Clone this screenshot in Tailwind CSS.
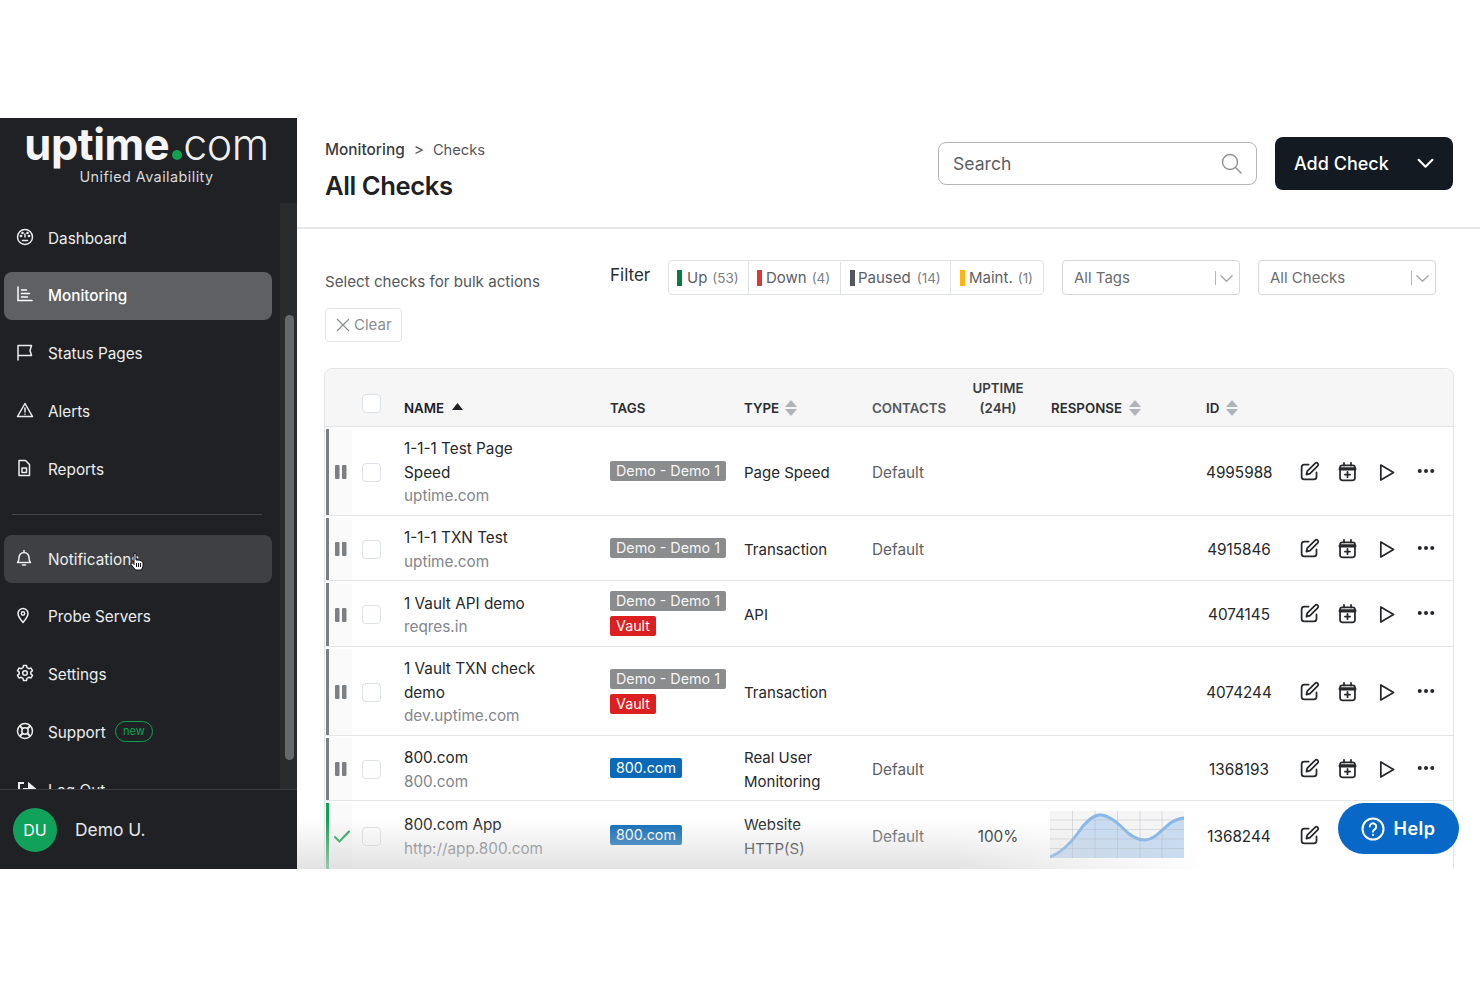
<!DOCTYPE html>
<html lang="en">
<head>
<meta charset="utf-8">
<title>All Checks</title>
<script src="https://cdn.jsdelivr.net/npm/@tailwindcss/browser@4"></script>
</head>
<body class="bg-white font-['Inter',sans-serif] text-[#26282b]">
<svg class="hidden" aria-hidden="true">
  <symbol id="edit" viewBox="0 0 24 24" fill="none" stroke="currentColor" stroke-width="2" stroke-linecap="round" stroke-linejoin="round"><path d="M11 4H6a3 3 0 0 0-3 3v11a3 3 0 0 0 3 3h11a3 3 0 0 0 3-3v-5"/><path d="M18.4 2.6a2 2 0 0 1 3 3L12.5 14.500 8.500 15.500l1-4z"/></symbol>
  <symbol id="cal" viewBox="0 0 24 24" fill="none" stroke="currentColor" stroke-width="2" stroke-linecap="round"><rect x="3.500" y="5" width="17" height="17" rx="2.500"/><path d="M3.500 9h17" stroke-width="3.500"/><path d="M8 2v3M16 2v3M12 12.500v6M9 15.500h6"/></symbol>
  <symbol id="play" viewBox="0 0 24 24" fill="none" stroke="currentColor" stroke-width="2" stroke-linejoin="round"><path d="M5.500 3.500v17l14.500-8.500z"/></symbol>
  <symbol id="dots" viewBox="0 0 24 24" fill="currentColor"><circle cx="4.500" cy="12" r="2.400"/><circle cx="12" cy="12" r="2.400"/><circle cx="19.500" cy="12" r="2.400"/></symbol>
  <symbol id="pause" viewBox="0 0 12 14" fill="currentColor"><rect x="0" y="0" width="4.500" height="14" rx="1"/><rect x="7" y="0" width="4.500" height="14" rx="1"/></symbol>
  <symbol id="sort" viewBox="0 0 12 16" fill="#b0b4b8"><path d="M6 0l6 7H0zM6 16L0 9h12z"/></symbol>
  <symbol id="chev" viewBox="0 0 16 16" fill="none" stroke="currentColor" stroke-width="1.500" stroke-linecap="round" stroke-linejoin="round"><path d="M2 5l6 6 6-6"/></symbol>
</svg>

<div class="w-[1480px] h-[987px] pt-[118px] overflow-hidden">
  <div class="relative flex h-[751px] overflow-hidden">

    <!-- Sidebar -->
    <aside class="relative w-[297px] shrink-0 h-full bg-[#1f2125] text-[#eceded] flex flex-col">
      <div class="h-[85px] shrink-0 flex flex-col items-center pr-[4px]">
        <div class="flex items-baseline h-[50px] mt-[1px] text-white leading-[50px]">
          <span class="font-bold text-[43.500px] tracking-[-0.5px] text-[#f5f5f5]">uptime</span>
          <span class="w-[10px] h-[10px] rounded-full bg-[#12a150] ml-[3px] mr-[1px] mb-[1px]"></span>
          <span class="font-light text-[43px] tracking-[-0.5px] text-[#f0f0f0]">com</span>
        </div>
        <div class="text-[14.400px] leading-[18px] mt-[-1px] tracking-[0.45px] text-[#d8d9da]">Unified Availability</div>
      </div>

      <div class="relative flex-1 min-h-0 overflow-hidden">
        <nav class="pt-[11px] pl-[4px] w-[272px] flex flex-col gap-[9.750px] text-[15.300px]">
          <a class="flex items-center h-[48px] rounded-lg gap-[14px] pl-[12px]">
            <svg class="w-[18px] h-[18px] -mt-[3px]" viewBox="0 0 18 18" fill="none" stroke="currentColor" stroke-width="1.500" stroke-linecap="round"><circle cx="9" cy="9" r="7.500"/><path d="M9 9V6M6.500 12.500h5" /><circle cx="5" cy="8" r=".6"/><circle cx="6.500" cy="5" r=".6"/><circle cx="11.500" cy="5" r=".6"/><circle cx="13" cy="8" r=".6"/></svg>
            <span class="pt-[2px]">Dashboard</span>
          </a>
          <a class="flex items-center h-[48px] rounded-lg gap-[14px] pl-[12px] bg-[#5f6064] text-white font-medium">
            <svg class="w-[18px] h-[18px] -mt-[3px]" viewBox="0 0 18 18" fill="none" stroke="currentColor" stroke-width="1.500" stroke-linecap="round"><path d="M2 2v13.500h14M5.500 5h5M5.500 8.500h8M5.500 12h6"/></svg>
            <span class="pt-[2px]">Monitoring</span>
          </a>
          <a class="flex items-center h-[48px] rounded-lg gap-[14px] pl-[12px]">
            <svg class="w-[18px] h-[18px] -mt-[3px]" viewBox="0 0 18 18" fill="none" stroke="currentColor" stroke-width="1.500" stroke-linejoin="round" stroke-linecap="round"><path d="M2 17V2.500h13.500l-1.500 5 1.500 5H2"/></svg>
            <span class="pt-[2px]">Status Pages</span>
          </a>
          <a class="flex items-center h-[48px] rounded-lg gap-[14px] pl-[12px]">
            <svg class="w-[18px] h-[18px] -mt-[3px]" viewBox="0 0 18 18" fill="none" stroke="currentColor" stroke-width="1.500" stroke-linejoin="round" stroke-linecap="round"><path d="M9 2.500L16.500 15.500h-15zM9 7v4M9 13.200v.1"/></svg>
            <span class="pt-[2px]">Alerts</span>
          </a>
          <a class="flex items-center h-[48px] rounded-lg gap-[14px] pl-[12px]">
            <svg class="w-[18px] h-[18px] -mt-[3px] -ml-[1px] mr-[1px]" viewBox="0 0 18 18" fill="none" stroke="currentColor" stroke-width="1.500" stroke-linejoin="round" stroke-linecap="round"><path d="M4 1.500h6.500L14.500 5.500v11H4zM7 9h4.500v4.500H7z"/></svg>
            <span class="pt-[2px]">Reports</span>
          </a>
          <div class="h-px bg-[#44464a] ml-[8px] w-[250px] my-[10.750px]"></div>
          <a class="relative flex items-center h-[48px] rounded-lg gap-[14px] pl-[12px] bg-[#3f4044]">
            <svg class="w-[18px] h-[18px] -mt-[3px] -ml-[1px] mr-[1px]" viewBox="0 0 18 18" fill="none" stroke="currentColor" stroke-width="1.500" stroke-linejoin="round" stroke-linecap="round"><path d="M2.500 13.500c1.500-1.500 1.500-3 1.500-5a5 5 0 0 1 10 0c0 2 0 3.500 1.500 5zM9 1.500v1.500M7.500 16h3"/></svg>
            <span class="pt-[2px]">Notifications</span>
            <svg class="absolute left-[126px] top-[17px] w-[14px] h-[19px]" viewBox="0 0 14 19"><path d="M4 1.500Q5.500.5 6 2V8H8L9.500 8.300 11 8.800 12.500 9.500 13 11V14L11.500 18H5.500L1 12.500Q.5 10.500 2.500 11L4 12.500Z" fill="#fff" stroke="#111" stroke-width="1"/><path d="M6.500 11v4M8.500 11v4M10.500 11v4" stroke="#111" stroke-width="1"/></svg>
          </a>
          <a class="flex items-center h-[48px] rounded-lg gap-[14px] pl-[12px]">
            <svg class="w-[18px] h-[18px] -mt-[3px] -ml-[2px] mr-[2px]" viewBox="0 0 18 18" fill="none" stroke="currentColor" stroke-width="1.500" stroke-linejoin="round"><path d="M9 16.500c-3-3.500-5-6-5-9a5 5 0 0 1 10 0c0 3-2 5.500-5 9z"/><circle cx="9" cy="7.500" r="1.700"/></svg>
            <span class="pt-[2px]">Probe Servers</span>
          </a>
          <a class="flex items-center h-[48px] rounded-lg gap-[14px] pl-[12px]">
            <svg class="w-[18px] h-[18px] -mt-[3px]" viewBox="0 0 18 18" fill="none" stroke="currentColor" stroke-width="1.500" stroke-linejoin="round"><path d="M7.500 1.500h3l.5 2.200 1.800 1 2.200-.7 1.500 2.600-1.700 1.500v1.800l1.700 1.500-1.500 2.600-2.200-.7-1.800 1-.5 2.200h-3l-.5-2.200-1.800-1-2.200.7-1.500-2.600 1.700-1.500V8.100L1.500 6.600 3 4l2.200.7 1.800-1z"/><circle cx="9" cy="9" r="2.300"/></svg>
            <span class="pt-[2px]">Settings</span>
          </a>
          <a class="flex items-center h-[48px] rounded-lg gap-[14px] pl-[12px]">
            <svg class="w-[18px] h-[18px] -mt-[3px]" viewBox="0 0 18 18" fill="none" stroke="currentColor" stroke-width="1.500"><circle cx="9" cy="9" r="7.500"/><circle cx="9" cy="9" r="3.200"/><path d="M3.700 3.700l3 3M14.300 3.700l-3 3M3.700 14.300l3-3M14.300 14.300l-3-3" stroke-width="2"/></svg>
            <span class="pt-[2px]">Support</span>
            <span class="-ml-[5px] -mt-[2px] h-[21px] w-[38px] rounded-full border border-[#12a150] text-[#12a150] text-[11px] leading-[18px] text-center">new</span>
          </a>
          <a class="flex items-center h-[48px] rounded-lg gap-[14px] pl-[12px]">
            <svg class="w-[20px] h-[18px] -mt-[3px]" viewBox="0 0 20 18" fill="none" stroke="currentColor" stroke-width="2"><path d="M8 3H3v12h5"/><path d="M7 9h6V4l6 5-6 5V9" fill="currentColor"/></svg>
            <span class="-ml-[2px] pt-[2px]">Log Out</span>
          </a>
        </nav>
        <div class="absolute right-0 top-0 bottom-0 w-[17px] bg-[#2a2b2c] mt-0">
          <div class="absolute top-[112px] left-[5px] w-[9px] h-[445px] rounded-full bg-[#67686a]"></div>
        </div>
      </div>

      <div class="h-[80px] shrink-0 border-t border-[#3a3c40] bg-[#1f2125] flex items-center pl-[13px] gap-[18px] relative">
        <div class="w-[44px] h-[44px] rounded-full bg-[#10a25a] text-white text-[16px] flex items-center justify-center">DU</div>
        <span class="text-[17.400px] text-[#e8e8e8] pt-[1px]">Demo U.</span>
      </div>
    </aside>

    <!-- Main -->
    <main class="flex-1 min-w-0 h-full overflow-hidden bg-white">
      <header class="h-[111px] border-b-2 border-[#e6e8ea] flex items-start pl-[28px] pr-[27px]">
        <div class="flex-1">
          <div class="mt-[21px] pt-[1px] text-[15.400px] leading-[20px] flex gap-[9px]">
            <span class="font-medium text-[#3a3d40]">Monitoring</span><span class="text-[#555]">&gt;</span><span class="text-[#55585b] text-[14.700px]">Checks</span>
          </div>
          <h1 class="mt-[8px] text-[25.600px] leading-[36px] font-semibold text-[#1f2125] tracking-[-0.4px]">All Checks</h1>
        </div>
        <div class="mt-[24px] w-[319px] h-[43px] rounded-lg border border-[#b5b5b5] flex items-center justify-between pl-[14px] pr-[14px] text-[17.600px] text-[#5d6064]">
          <span class="pt-[1px]">Search</span>
          <svg class="w-[21px] h-[21px] text-[#8f9294]" viewBox="0 0 21 21" fill="none" stroke="currentColor" stroke-width="1.400" stroke-linecap="round"><circle cx="9" cy="9" r="7.500"/><path d="M14.500 14.500l5.500 5.500"/></svg>
        </div>
        <button class="ml-[18px] mt-[19px] w-[178px] h-[53px] rounded-lg bg-[#131a22] text-white text-[18px] font-medium flex items-center justify-between pl-[19px] pr-[19px]">
          <span>Add Check</span>
          <svg class="w-[17px] h-[17px]" viewBox="0 0 16 16" fill="none" stroke="currentColor" stroke-width="2" stroke-linecap="round" stroke-linejoin="round"><path d="M1.500 4.500L8 11l6.500-6.500"/></svg>
        </button>
      </header>

      <section class="h-[139px] pl-[28px] relative">
        <div class="flex items-start pt-[31px]">
          <div class="w-[285px] pt-[12px] text-[15.150px] leading-[20px] text-[#55585b]">Select checks for bulk actions</div>
          <div class="w-[58px] pt-[4px] text-[17px] leading-[22px] text-[#2a2c2f]">Filter</div>
          <div class="w-[376px] h-[35px] pt-[1px] rounded border border-[#dfe2e5] flex items-center text-[15px] text-[#5d6064]">
            <div class="h-full w-[80px] flex items-center pl-[8px] border-r border-[#dfe2e5]"><span class="w-[5px] h-[16px] bg-[#0b7a43] mr-[5px]"></span>Up<span class="ml-[5px] text-[13.500px] text-[#7d8083]">(53)</span></div>
            <div class="h-full w-[92px] flex items-center pl-[8px] border-r border-[#dfe2e5]"><span class="w-[5px] h-[16px] bg-[#d93a35] mr-[4px]"></span>Down<span class="ml-[5px] text-[13.500px] text-[#7d8083]">(4)</span></div>
            <div class="h-full w-[110px] flex items-center pl-[9px] border-r border-[#dfe2e5]"><span class="w-[5px] h-[16px] bg-[#55585b] mr-[3px]"></span>Paused<span class="ml-[6px] text-[13.500px] text-[#7d8083]">(14)</span></div>
            <div class="h-full flex-1 flex items-center pl-[9px]"><span class="w-[5px] h-[16px] bg-[#fdb515] mr-[4px]"></span>Maint.<span class="ml-[5px] text-[13.500px] text-[#7d8083]">(1)</span></div>
          </div>
          <div class="ml-[18px] w-[178px] h-[35px] pt-[1px] rounded border border-[#d4d6d8] flex items-center pl-[11px] pr-[5px] text-[15px] text-[#6b6e71]">
            <span class="flex-1">All Tags</span><span class="w-px h-[14px] bg-[#b5b7b9] mr-[3px]"></span><svg class="w-[15px] h-[15px] text-[#a5a7a9]"><use href="#chev"/></svg>
          </div>
          <div class="ml-[18px] w-[178px] h-[35px] pt-[1px] rounded border border-[#d4d6d8] flex items-center pl-[11px] pr-[5px] text-[15px] text-[#6b6e71]">
            <span class="flex-1">All Checks</span><span class="w-px h-[14px] bg-[#b5b7b9] mr-[3px]"></span><svg class="w-[15px] h-[15px] text-[#a5a7a9]"><use href="#chev"/></svg>
          </div>
        </div>
        <div class="absolute left-[28px] top-[79px] w-[77px] h-[34px] rounded border border-[#e2e4e6] flex items-center pl-[10px] gap-[4px] text-[15px] text-[#8a8d90]">
          <svg class="w-[14px] h-[14px]" viewBox="0 0 14 14" fill="none" stroke="currentColor" stroke-width="1.200"><path d="M1 1l12 12M13 1L1 13"/></svg>Clear
        </div>
      </section>

      <!-- Table -->
      <div class="ml-[27px] w-[1130px] border border-[#e3e5e7] rounded-t-lg text-[15.300px] leading-[23.500px]">
        <div class="h-[58px] bg-[#f6f6f6] border-b border-[#e3e5e7] rounded-t-lg flex items-end pb-[8px] text-[13.300px] leading-[20px] font-semibold text-[#2a2c2f]">
          <div class="w-[37px] shrink-0"></div>
          <div class="w-[19px] h-[19px] mb-[5px] rounded border border-[#dce1e5] bg-white shrink-0"></div>
          <div class="w-[23px] shrink-0"></div>
          <div class="w-[206px] shrink-0 flex items-center gap-[8px] text-[#1f2125]">NAME<svg class="w-[11px] h-[7px] mb-[3px]" viewBox="0 0 11 7" fill="#1f2125"><path d="M5.500 0L11 7H0z"/></svg></div>
          <div class="w-[134px] shrink-0">TAGS</div>
          <div class="w-[128px] shrink-0 flex items-center gap-[6px]">TYPE<svg class="w-[12px] h-[16px]"><use href="#sort"/></svg></div>
          <div class="w-[100px] shrink-0 text-[#55585b]">CONTACTS</div>
          <div class="w-[52px] shrink-0 text-center leading-[20px] text-[#3a3c3f] whitespace-nowrap flex flex-col items-center">UPTIME<span>(24H)</span></div>
          <div class="w-[27px] shrink-0"></div>
          <div class="w-[155px] shrink-0 flex items-center gap-[7px]">RESPONSE<svg class="w-[12px] h-[16px]"><use href="#sort"/></svg></div>
          <div class="flex items-center gap-[7px]">ID<svg class="w-[12px] h-[16px]"><use href="#sort"/></svg></div>
        </div>

        <div class="h-[89px] pt-[2px] flex items-center border-b border-[#e3e5e7]">
          <div class="ml-px h-full w-[26px] border-l-[3px] border-[#7c8083] bg-[#fafafa] flex items-center pl-[6px] shrink-0"><svg class="w-[12px] h-[14px] text-[#7c8083]"><use href="#pause"/></svg></div>
          <div class="ml-[10px] w-[19px] h-[19px] rounded border border-[#dce1e5] shrink-0"></div>
          <div class="w-[23px] shrink-0"></div>
          <div class="w-[206px] shrink-0 pt-[1px]"><div class="w-[140px]">1-1-1 Test Page Speed</div><div class="text-[#83868a]">uptime.com</div></div>
          <div class="w-[134px] shrink-0 -mt-[2px]"><span class="block w-fit h-[20px] px-[6px] rounded-[2px] bg-[#8a8c8e] text-white/95 text-[14.300px] leading-[20px] whitespace-nowrap">Demo - Demo 1</span></div>
          <div class="w-[128px] shrink-0 pt-[1px] text-[15px]">Page Speed</div>
          <div class="w-[179px] shrink-0 pt-[1px] text-[#5d6064]">Default</div>
          <div class="w-[155px] shrink-0"></div>
          <div class="w-[76px] shrink-0 pt-[1px] text-center pr-[10px]">4995988</div>
          <div class="flex items-center gap-[17px] ml-[17px]"><svg class="w-[21px] h-[21px] -mt-[2px]"><use href="#edit"/></svg><svg class="w-[21px] h-[21px] -mt-[2px]"><use href="#cal"/></svg><svg class="w-[21px] h-[21px] ml-[1px]"><use href="#play"/></svg><svg class="w-[20px] h-[20px] ml-[2px] -mt-[3px]"><use href="#dots"/></svg></div>
        </div>

        <div class="h-[65px] pt-[2px] flex items-center border-b border-[#e3e5e7]">
          <div class="ml-px h-full w-[26px] border-l-[3px] border-[#7c8083] bg-[#fafafa] flex items-center pl-[6px] shrink-0"><svg class="w-[12px] h-[14px] text-[#7c8083]"><use href="#pause"/></svg></div>
          <div class="ml-[10px] w-[19px] h-[19px] rounded border border-[#dce1e5] shrink-0"></div>
          <div class="w-[23px] shrink-0"></div>
          <div class="w-[206px] shrink-0 pt-[1px]"><div>1-1-1 TXN Test</div><div class="text-[#83868a]">uptime.com</div></div>
          <div class="w-[134px] shrink-0 -mt-[2px]"><span class="block w-fit h-[20px] px-[6px] rounded-[2px] bg-[#8a8c8e] text-white/95 text-[14.300px] leading-[20px] whitespace-nowrap">Demo - Demo 1</span></div>
          <div class="w-[128px] shrink-0 pt-[1px] text-[15px]">Transaction</div>
          <div class="w-[179px] shrink-0 pt-[1px] text-[#5d6064]">Default</div>
          <div class="w-[155px] shrink-0"></div>
          <div class="w-[76px] shrink-0 pt-[1px] text-center pr-[10px]">4915846</div>
          <div class="flex items-center gap-[17px] ml-[17px]"><svg class="w-[21px] h-[21px] -mt-[2px]"><use href="#edit"/></svg><svg class="w-[21px] h-[21px] -mt-[2px]"><use href="#cal"/></svg><svg class="w-[21px] h-[21px] ml-[1px]"><use href="#play"/></svg><svg class="w-[20px] h-[20px] ml-[2px] -mt-[3px]"><use href="#dots"/></svg></div>
        </div>

        <div class="h-[66px] pt-[2px] flex items-center border-b border-[#e3e5e7]">
          <div class="ml-px h-full w-[26px] border-l-[3px] border-[#7c8083] bg-[#fafafa] flex items-center pl-[6px] shrink-0"><svg class="w-[12px] h-[14px] text-[#7c8083]"><use href="#pause"/></svg></div>
          <div class="ml-[10px] w-[19px] h-[19px] rounded border border-[#dce1e5] shrink-0"></div>
          <div class="w-[23px] shrink-0"></div>
          <div class="w-[206px] shrink-0 pt-[1px]"><div>1 Vault API demo</div><div class="text-[#83868a]">reqres.in</div></div>
          <div class="w-[134px] shrink-0 -mt-[2px] flex flex-col items-start gap-[5px]"><span class="block h-[20px] px-[6px] rounded-[2px] bg-[#8a8c8e] text-white/95 text-[14.300px] leading-[20px] whitespace-nowrap">Demo - Demo 1</span><span class="block h-[20px] px-[6px] rounded-[2px] bg-[#dc1f1f] text-white text-[14.300px] leading-[20px]">Vault</span></div>
          <div class="w-[128px] shrink-0 pt-[1px] text-[15px]">API</div>
          <div class="w-[179px] shrink-0"></div>
          <div class="w-[155px] shrink-0"></div>
          <div class="w-[76px] shrink-0 pt-[1px] text-center pr-[10px]">4074145</div>
          <div class="flex items-center gap-[17px] ml-[17px]"><svg class="w-[21px] h-[21px] -mt-[2px]"><use href="#edit"/></svg><svg class="w-[21px] h-[21px] -mt-[2px]"><use href="#cal"/></svg><svg class="w-[21px] h-[21px] ml-[1px]"><use href="#play"/></svg><svg class="w-[20px] h-[20px] ml-[2px] -mt-[3px]"><use href="#dots"/></svg></div>
        </div>

        <div class="h-[89px] pt-[2px] flex items-center border-b border-[#e3e5e7]">
          <div class="ml-px h-full w-[26px] border-l-[3px] border-[#7c8083] bg-[#fafafa] flex items-center pl-[6px] shrink-0"><svg class="w-[12px] h-[14px] text-[#7c8083]"><use href="#pause"/></svg></div>
          <div class="ml-[10px] w-[19px] h-[19px] rounded border border-[#dce1e5] shrink-0"></div>
          <div class="w-[23px] shrink-0"></div>
          <div class="w-[206px] shrink-0 pt-[1px]"><div class="w-[150px]">1 Vault TXN check demo</div><div class="text-[#83868a]">dev.uptime.com</div></div>
          <div class="w-[134px] shrink-0 -mt-[2px] flex flex-col items-start gap-[5px]"><span class="block h-[20px] px-[6px] rounded-[2px] bg-[#8a8c8e] text-white/95 text-[14.300px] leading-[20px] whitespace-nowrap">Demo - Demo 1</span><span class="block h-[20px] px-[6px] rounded-[2px] bg-[#dc1f1f] text-white text-[14.300px] leading-[20px]">Vault</span></div>
          <div class="w-[128px] shrink-0 pt-[1px] text-[15px]">Transaction</div>
          <div class="w-[179px] shrink-0"></div>
          <div class="w-[155px] shrink-0"></div>
          <div class="w-[76px] shrink-0 pt-[1px] text-center pr-[10px]">4074244</div>
          <div class="flex items-center gap-[17px] ml-[17px]"><svg class="w-[21px] h-[21px] -mt-[2px]"><use href="#edit"/></svg><svg class="w-[21px] h-[21px] -mt-[2px]"><use href="#cal"/></svg><svg class="w-[21px] h-[21px] ml-[1px]"><use href="#play"/></svg><svg class="w-[20px] h-[20px] ml-[2px] -mt-[3px]"><use href="#dots"/></svg></div>
        </div>

        <div class="h-[65px] pt-[2px] flex items-center border-b border-[#e3e5e7]">
          <div class="ml-px h-full w-[26px] border-l-[3px] border-[#7c8083] bg-[#fafafa] flex items-center pl-[6px] shrink-0"><svg class="w-[12px] h-[14px] text-[#7c8083]"><use href="#pause"/></svg></div>
          <div class="ml-[10px] w-[19px] h-[19px] rounded border border-[#dce1e5] shrink-0"></div>
          <div class="w-[23px] shrink-0"></div>
          <div class="w-[206px] shrink-0 pt-[1px]"><div>800.com</div><div class="text-[#83868a]">800.com</div></div>
          <div class="w-[134px] shrink-0 -mt-[2px]"><span class="block w-fit h-[20px] px-[6px] rounded-[2px] bg-[#0a6ab8] text-white text-[14.300px] leading-[20px]">800.com</span></div>
          <div class="w-[128px] shrink-0 pt-[1px] text-[15px]">Real User Monitoring</div>
          <div class="w-[179px] shrink-0 pt-[1px] text-[#5d6064]">Default</div>
          <div class="w-[155px] shrink-0"></div>
          <div class="w-[76px] shrink-0 pt-[1px] text-center pr-[10px]">1368193</div>
          <div class="flex items-center gap-[17px] ml-[17px]"><svg class="w-[21px] h-[21px] -mt-[2px]"><use href="#edit"/></svg><svg class="w-[21px] h-[21px] -mt-[2px]"><use href="#cal"/></svg><svg class="w-[21px] h-[21px] ml-[1px]"><use href="#play"/></svg><svg class="w-[20px] h-[20px] ml-[2px] -mt-[3px]"><use href="#dots"/></svg></div>
        </div>

        <div class="h-[68px] pt-[2px] flex items-center">
          <div class="ml-px h-full w-[26px] border-l-[3px] border-[#12a150] bg-[#fafafa] flex items-center pl-[5px] shrink-0"><svg class="w-[16px] h-[13px] text-[#12a150]" viewBox="0 0 16 13" fill="none" stroke="currentColor" stroke-width="2" stroke-linecap="round" stroke-linejoin="round"><path d="M1 7l4.500 4.500L15 1.500"/></svg></div>
          <div class="ml-[10px] w-[19px] h-[19px] rounded border border-[#dce1e5] shrink-0"></div>
          <div class="w-[23px] shrink-0"></div>
          <div class="w-[206px] shrink-0 pt-[1px]"><div>800.com App</div><div class="text-[#7a7d81]">http://app.800.com</div></div>
          <div class="w-[134px] shrink-0 -mt-[2px]"><span class="block w-fit h-[20px] px-[6px] rounded-[2px] bg-[#0a6ab8] text-white text-[14.300px] leading-[20px]">800.com</span></div>
          <div class="w-[128px] shrink-0 pt-[1px] text-[15px]"><div class="w-[100px]">Website HTTP(S)</div></div>
          <div class="w-[100px] shrink-0 pt-[1px] text-[#5d6064]">Default</div>
          <div class="w-[52px] shrink-0 pt-[1px] text-center">100%</div>
          <div class="w-[27px] shrink-0"></div>
          <div class="w-[155px] shrink-0">
            <svg class="block w-[134px] h-[47px] -ml-[1px] -mt-[3px]" viewBox="0 0 134 47"><rect width="134" height="47" fill="#f5f5f5"/><path d="M0 46C10 42 18 36 28 22 36 10 42 5 49 4 58 3 68 12 78 22 84 27 88 29 95 29 106 28 112 18 122 11 128 8 131 7 134 7V47H0z" fill="#c9dcf1"/><path d="M0 46C10 42 18 36 28 22 36 10 42 5 49 4 58 3 68 12 78 22 84 27 88 29 95 29 106 28 112 18 122 11 128 8 131 7 134 7" fill="none" stroke="#86b8ea" stroke-width="3"/><path d="M22.500 0v47M45 0v47M67.500 0v47M90 0v47M112 0v47M0 9h134M0 18.500h134M0 28h134M0 37.500h134" stroke="#a9b1bb" stroke-opacity=".4" stroke-width="1"/></svg>
          </div>
          <div class="w-[76px] shrink-0 pt-[1px] text-center pr-[10px]">1368244</div>
          <div class="flex items-center gap-[17px] ml-[17px]"><svg class="w-[21px] h-[21px] -mt-[2px]"><use href="#edit"/></svg></div>
        </div>
      </div>
    </main>

    <div class="absolute left-[297px] right-[270px] bottom-0 h-[50px] pointer-events-none bg-gradient-to-b from-transparent to-[#d6d6d6]/70 [mask-image:linear-gradient(to_right,black_72%,transparent_100%)]"></div>

    <button class="absolute left-[1338px] top-[685px] w-[121px] h-[51px] rounded-full bg-[#0868c8] text-white flex items-center justify-center gap-[8px] text-[18px] font-semibold tracking-[0.5px]">
      <svg class="w-[24px] h-[24px]" viewBox="0 0 24 24" fill="none" stroke="currentColor" stroke-width="2" stroke-linecap="round"><circle cx="12" cy="12" r="10.500"/><path d="M8.800 9.500a3.200 3.200 0 1 1 4.800 2.800c-1 .6-1.600 1.200-1.600 2.400M12 17.800v.2"/></svg>
      Help
    </button>
  </div>
</div>
</body>
</html>
